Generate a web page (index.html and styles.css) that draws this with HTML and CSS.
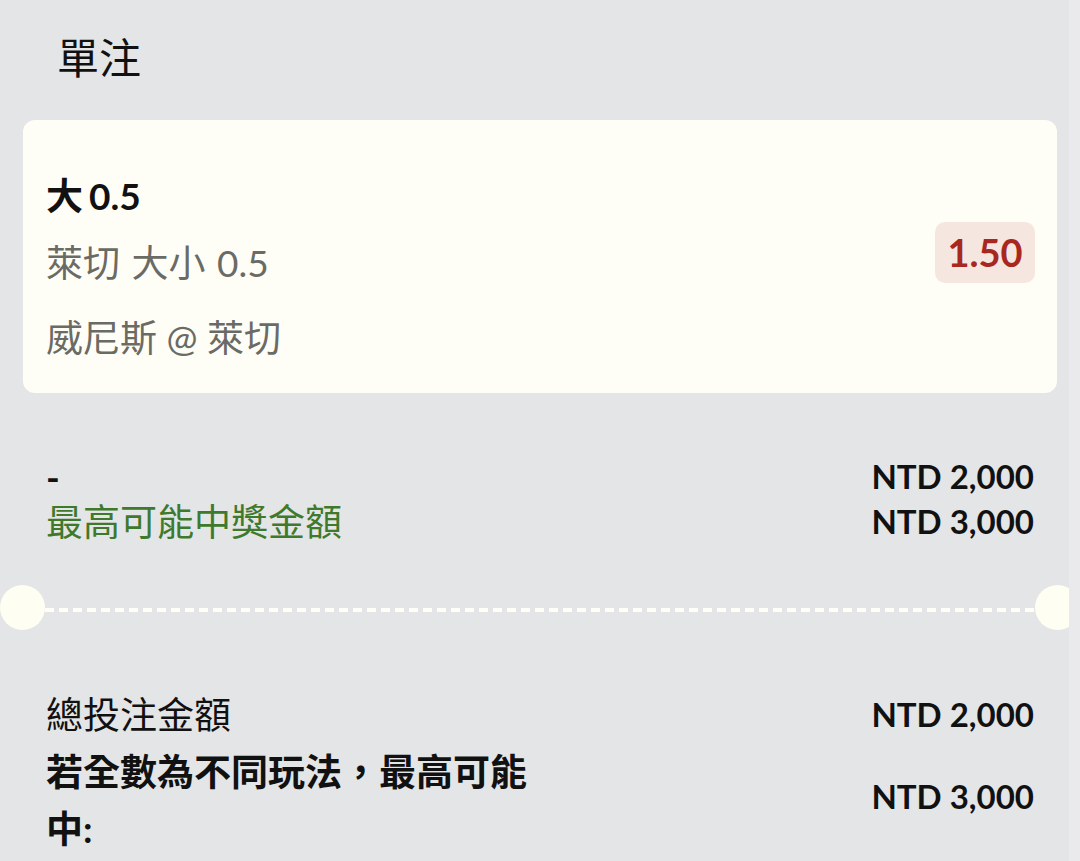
FILE: index.html
```html
<!DOCTYPE html>
<html lang="zh-Hant">
<head>
    <meta charset="UTF-8">
    <meta name="viewport" content="width=device-width, initial-scale=1.0">
    <title>單注</title>
    <link rel="stylesheet" href="styles.css">
</head>
<body>
    <div class="page">
        <h1 class="title">單注</h1>

        <div class="bet-card">
            <div class="bet-info">
                <div class="bet-pick">大 0.5</div>
                <div class="bet-market">萊切 大小 0.5</div>
                <div class="bet-match">威尼斯 @ 萊切</div>
            </div>
            <div class="odds">1.50</div>
        </div>

        <div class="summary">
            <div class="row">
                <span class="label strong">-</span>
                <span class="amount">NTD 2,000</span>
            </div>
            <div class="row">
                <span class="label win">最高可能中獎金額</span>
                <span class="amount">NTD 3,000</span>
            </div>
        </div>
    </div>

    <div class="divider">
        <span class="notch"></span>
        <span class="dashes"></span>
        <span class="notch"></span>
    </div>

    <div class="page">
        <div class="totals">
            <div class="row">
                <span class="label">總投注金額</span>
                <span class="amount">NTD 2,000</span>
            </div>
            <div class="row">
                <span class="label strong">若全數為不同玩法，最高可能中:</span>
                <span class="amount">NTD 3,000</span>
            </div>
        </div>
    </div>

    <div class="scroll-track"></div>
</body>
</html>
```

FILE: styles.css
```css
body {
    margin: 0;
    background-color: #e4e5e7;
    font-family: Lato, "Noto Sans CJK TC", sans-serif;
    color: #111;
    overflow: hidden;
}

.page {
    padding: 0 23px;
}

.title {
    margin: 0;
    padding: 30px 0 0 34px;
    font-size: 42px;
    font-weight: 400;
    line-height: 56px;
    height: 90px;
}

.bet-card {
    display: flex;
    align-items: center;
    justify-content: space-between;
    background-color: #fffef6;
    border-radius: 12px;
    padding: 46px 22px 25px 23px;
}

.bet-info div {
    font-size: 37px;
    line-height: 60px;
}

.bet-pick {
    font-weight: 700;
    word-spacing: -3px;
}

.bet-market {
    color: #6b6b66;
    margin-top: 7px;
    word-spacing: 2px;
}

.bet-match {
    color: #6b6b66;
    margin-top: 15px;
}

.odds {
    width: 100px;
    height: 61px;
    line-height: 61px;
    text-align: center;
    border-radius: 10px;
    background-color: #f5e7e0;
    color: #a8281f;
    font-size: 38px;
    font-weight: 700;
    margin-bottom: 30px;
}

.summary {
    padding: 61px 23px 0;
}

.row {
    display: flex;
    justify-content: space-between;
    align-items: center;
}

.summary .row {
    line-height: 45px;
}

.label {
    font-size: 37px;
}

.amount {
    font-size: 33px;
    font-weight: 700;
}

.strong {
    font-weight: 700;
}

.win {
    color: #3f7a2c;
}

.divider {
    display: flex;
    align-items: center;
    margin-top: 41px;
    height: 45px;
}

.notch {
    width: 45px;
    height: 45px;
    border-radius: 50%;
    background-color: #fffef3;
    flex: none;
}

.dashes {
    flex: 1;
    height: 4px;
    margin-top: 5px;
    background: repeating-linear-gradient(90deg, #fffef8 0 9px, transparent 9px 14px);
}

.totals {
    padding: 56px 23px 0;
}

.totals .row {
    line-height: 57px;
}

.totals .row:last-child .amount {
    margin-bottom: 8px;
}

.totals .label {
    max-width: 500px;
}

.scroll-track {
    position: fixed;
    top: 0;
    right: 0;
    width: 11px;
    height: 100%;
    background-color: #eaeaec;
}
```
